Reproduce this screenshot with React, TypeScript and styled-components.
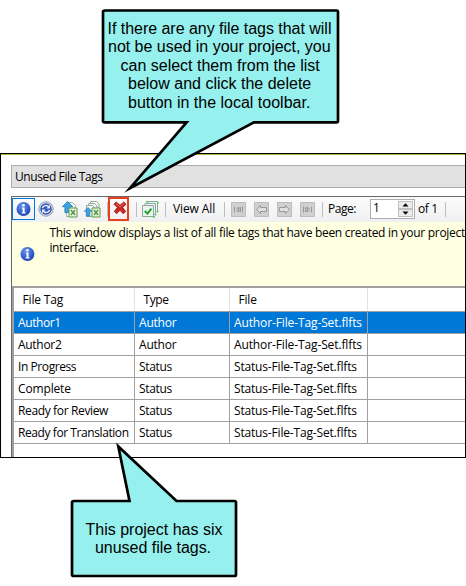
import React from "react";
import styled, { createGlobalStyle } from "styled-components";

const GlobalStyle = createGlobalStyle`
  * { box-sizing: border-box; }
  body { margin: 0; background: #fff; }
`;

const Page = styled.main`
  position: relative;
  width: 466px;
  height: 586px;
  padding-top: 153px;
  overflow: hidden;
  color: #000;
  font: 12px/15px "Open Sans", "Noto Sans", sans-serif;
`;

const Text = styled.span<{ $track?: number }>`
  letter-spacing: ${(p) => p.$track ?? 0}px;
  white-space: nowrap;
`;

const Window = styled.section`
  display: flex;
  flex-direction: column;
  width: 466px;
  height: 305px;
  padding: 11px 0 0 10px;
  border: 1px solid #000;
  box-shadow: inset 0 1px 0 #a8b43c;
  background: #fff;
`;

const TitleBar = styled.header`
  flex: none;
  height: 23px;
  padding-left: 3px;
  border: 1px solid #adadad;
  border-right: 0;
  background: #e1e1e1;
  line-height: 21px;
`;

const Panel = styled.div`
  display: flex;
  flex: 1;
  flex-direction: column;
  margin-top: 8px;
  border: solid #696969;
  border-width: 1px 0 0 1px;
  overflow: hidden;
`;

const Toolbar = styled.div`
  display: flex;
  flex: none;
  align-items: center;
  height: 25px;
  padding-bottom: 1px;
  background: linear-gradient(#fbfbfb, #f0f0f0);
`;

const ToolButton = styled.button<{ $w: number; $gap?: number; $active?: boolean }>`
  display: flex;
  flex: none;
  align-items: center;
  justify-content: center;
  width: ${(p) => p.$w}px;
  height: 22px;
  margin: 0 0 0 ${(p) => p.$gap ?? 0}px;
  padding: 0;
  border: ${(p) => (p.$active ? "1px solid #0078d7" : "0")};
  background: transparent;
  color: #000;
  font: inherit;
`;

const DeleteButton = styled(ToolButton)`
  height: 24px;
  border: 2px solid #e8401c;
  padding: 0 0 3px 3px;
`;

const Separator = styled.i<{ $gap: number }>`
  flex: none;
  width: 1px;
  height: 15px;
  margin-left: ${(p) => p.$gap}px;
  background: #bdbdbd;
`;

const Label = styled(Text)<{ $gap: number; $w: number }>`
  flex: none;
  width: ${(p) => p.$w}px;
  margin-left: ${(p) => p.$gap}px;
  line-height: 14px;
`;

const Spinner = styled.div`
  display: flex;
  flex: none;
  width: 45px;
  height: 20px;
  margin-left: 14px;
  border: 1px solid #abadb3;
  background: #fff;
`;

const SpinnerValue = styled.span`
  flex: 1;
  padding-left: 2px;
  height: 16px;
  line-height: 16px;
`;

const SpinnerButtons = styled.div`
  display: flex;
  flex-direction: column;
  width: 16px;
  padding: 1px 1px 1px 0;
`;

const StepButton = styled.span`
  display: flex;
  flex: 1;
  align-items: center;
  justify-content: center;
  border: 1px solid #c0c0c0;
  background: #ececec;
`;

const Message = styled.div`
  display: flex;
  flex: none;
  align-items: center;
  height: 64px;
  padding-left: 8px;
  background: #ffffe1;
`;

const MessageText = styled.p`
  display: flex;
  flex-direction: column;
  align-self: flex-start;
  margin: 3px 0 0 13.5px;
`;

const Table = styled.div`
  flex: 1;
  border: solid #a0a0a0;
  border-width: 2px 0 0 2px;
`;

const columns = "121px 95px 138px 1fr";

const HeaderRow = styled.div`
  display: grid;
  grid-template-columns: ${columns};
  height: 24px;
  border-bottom: 1px solid #a0a0a0;
  line-height: 23px;
`;

const HeaderCell = styled.div`
  padding-left: 8.5px;
  border-right: 1px solid #e2e2e2;
  &:last-child { border-right: 0; }
`;

const Row = styled.div<{ $selected?: boolean }>`
  display: grid;
  grid-template-columns: ${columns};
  height: 22px;
  border-bottom: 1px solid #a0a0a0;
  background: ${(p) => (p.$selected ? "#0078d7" : "#fff")};
  color: ${(p) => (p.$selected ? "#fff" : "#000")};
  line-height: 21px;
`;

const Cell = styled.div`
  padding-left: 4px;
  border-right: 1px solid #a0a0a0;
  &:last-child { border-right: 0; }
`;

const Callout = styled.aside<{ $x: number; $y: number; $w: number; $h: number }>`
  position: absolute;
  left: ${(p) => p.$x}px;
  top: ${(p) => p.$y}px;
  width: ${(p) => p.$w}px;
  height: ${(p) => p.$h}px;
  font: 16px/18.5px "Liberation Sans", Arial, sans-serif;
`;

const Bubble = styled.svg`
  position: absolute;
  inset: 0;
  fill: #96f0ed;
  stroke: #000;
  stroke-width: 2.7;
  stroke-miterlimit: 10;
`;

const CalloutLines = styled.div<{ $top: number }>`
  position: relative;
  display: flex;
  flex-direction: column;
  padding-top: ${(p) => p.$top}px;
`;

const CalloutLine = styled(Text)<{ $indent: number }>`
  padding-left: ${(p) => p.$indent}px;
`;

const InfoIcon = () => (
  <svg width="16" height="16" viewBox="0 0 16 16">
    <defs>
      <radialGradient id="info" cx=".4" cy=".3" r=".75">
        <stop offset="0" stopColor="#6d94ee" />
        <stop offset=".6" stopColor="#3462cf" />
        <stop offset="1" stopColor="#1c3ea6" />
      </radialGradient>
    </defs>
    <circle cx="7.5" cy="8" r="7" fill="url(#info)" />
    <circle cx="7.5" cy="4.3" r="1.3" fill="#fff" />
    <path d="M6 6.6h2.6v4.7h1v1.2H5.700v-1.2h1V7.800H6z" fill="#fff" />
  </svg>
);

const RefreshIcon = () => (
  <svg width="16" height="16" viewBox="0 0 16 16" fill="none">
    <circle cx="8" cy="8" r="7.200" fill="#d3d7e4" stroke="#9a9fb2" />
    <circle cx="8" cy="8" r="5.700" fill="#3358b8" />
    <path d="M4.400 7.200C5 4.400 8.800 3.600 10.600 5.800M11.600 8.800C11 11.600 7.200 12.400 5.400 10.200" stroke="#e4ebff" strokeWidth="1.500" />
    <path d="M12 3.800v3.600H8.400zM4 12.200V8.600h3.600z" fill="#e4ebff" />
  </svg>
);

const Sheet = ({ x, y }: { x: number; y: number }) => (
  <g transform={`translate(${x} ${y})`}>
    <path d="M.5.5h8v9h-8z" fill="#eef5e8" stroke="#5d9a49" />
    <path d="M2.4 2.5l4.2 5M6.6 2.5l-4.2 5" stroke="#4e9138" strokeWidth="1.300" />
  </g>
);

const ExportIcon = () => (
  <svg width="16" height="17" viewBox="0 0 16 17" fill="none">
    <path d="M4.500 1.500h6l3 3v11h-9z" fill="#f4f7f8" stroke="#a3b0b2" />
    <path d="M5.500.500L10.800 5.700H8.200V11.500H2.900V5.700H.400z" fill="#3aa4e4" stroke="#2878b0" strokeWidth=".8" />
    <Sheet x={6.500} y={6.500} />
  </svg>
);

const ExportAllIcon = () => (
  <svg width="17" height="17" viewBox="0 0 17 17" fill="none">
    <path d="M6.500.5h6l2.500 2.500v8H6.500z" fill="#f4f8f5" stroke="#94aaa0" />
    <path d="M4.500 2.500h6l2.500 2.500v8H4.500z" fill="#f4f8f5" stroke="#94aaa0" />
    <path d="M2.500 4.500h6L11 7v8.500H2.500z" fill="#f4f8f5" stroke="#94aaa0" />
    <path d="M4 6.500L7.800 10.300H5.800v4.700H2.300v-4.700H.300z" fill="#3aa4e4" stroke="#2878b0" strokeWidth=".7" />
    <Sheet x={7.500} y={6.500} />
  </svg>
);

const DeleteIcon = () => (
  <svg width="14" height="14" viewBox="0 0 14 14">
    <path d="M1 3.200L3.200 1 7 4.300 10.800 1 13 3.200 9.700 6.600l3 4-2.500 2.200L7 9.300l-3.400 3.400L1.300 10.400l3-3.800z" fill="#cf2424" stroke="#8f1515" strokeWidth=".8" />
    <path d="M3 2.400L7 6l4-3.600" fill="none" stroke="#ee7070" strokeWidth=".9" />
  </svg>
);

const CheckAllIcon = () => (
  <svg width="17" height="17" viewBox="0 0 17 17" fill="none">
    <path d="M5.500.500h10v10.500h-10z" fill="#f0f6f2" stroke="#8ba69c" />
    <path d="M3 2.500h10.500V13.500H3z" fill="#f0f6f2" stroke="#8ba69c" />
    <path d="M.500 4.500h11v11H.500z" fill="#eaf3ee" stroke="#8ba69c" />
    <path d="M11 16h2M16 1v1.500M13.500 14h1M15.500 10.500h1M4 .500h1.500" stroke="#22e034" strokeWidth="1.500" />
    <path d="M2.800 10l2.700 2.600L9.400 7.600" stroke="#21a02b" strokeWidth="2" />
  </svg>
);

type NavKind = "first" | "prev" | "next" | "last";
const NavIcon = ({ kind }: { kind: NavKind }) => {
  const edge = kind === "first" || kind === "last";
  const flip = kind === "next" || kind === "last";
  return (
    <svg width="15" height="15" viewBox="0 0 15 15">
      <path d="M.500.500h14v14H.500z" fill="#d0d0d0" stroke="#bcbcbc" />
      <g transform={flip ? "translate(15 0) scale(-1 1)" : undefined} fill="#dedede" stroke="#999">
        {edge ? (
          <path d="M3.500 4.500v6M7.500 5v5L5.500 7.500zM9.500 5v5L7.500 7.500zM11.500 4.500v6" />
        ) : (
          <path d="M2.500 7.500L6.500 3.500v2h6v4h-6v2z" />
        )}
      </g>
    </svg>
  );
};

const Triangle = ({ down }: { down?: boolean }) => (
  <svg width="7" height="4" viewBox="0 0 7 4">
    <path d={down ? "M.5.5h6L3.5 3.7z" : "M.5 3.5h6L3.5.3z"} fill="#000" />
  </svg>
);

type Entry = [label: string, tracking: number];
const author: Entry = ["Author", -0.2];
const status: Entry = ["Status", -0.35];
const authorSet: Entry = ["Author-File-Tag-Set.flfts", -0.12];
const statusSet: Entry = ["Status-File-Tag-Set.flfts", -0.17];
const rows: Entry[][] = [
  [["Author1", -0.4], author, authorSet],
  [["Author2", -0.3], author, authorSet],
  [["In Progress", -0.42], status, statusSet],
  [["Complete", -0.15], status, statusSet],
  [["Ready for Review", -0.36], status, statusSet],
  [["Ready for Translation", -0.42], status, statusSet],
];
const headers: Entry[] = [["File Tag", -0.15], ["Type", -0.4], ["File", -0.2]];

export default function App() {
  return (
    <Page>
      <GlobalStyle />
      <Window>
        <TitleBar><Text $track={-0.4}>Unused File Tags</Text></TitleBar>
        <Panel>
          <Toolbar>
            <ToolButton $w={23} $active><InfoIcon /></ToolButton>
            <ToolButton $w={16} $gap={3}><RefreshIcon /></ToolButton>
            <ToolButton $w={16} $gap={8}><ExportIcon /></ToolButton>
            <ToolButton $w={17} $gap={6}><ExportAllIcon /></ToolButton>
            <Separator $gap={6} />
            <DeleteButton $w={21}><DeleteIcon /></DeleteButton>
            <Separator $gap={7} />
            <ToolButton $w={17} $gap={5}><CheckAllIcon /></ToolButton>
            <Separator $gap={6} />
            <Label $gap={7} $w={43} $track={-0.1}>View All</Label>
            <Separator $gap={8} />
            <ToolButton $w={15} $gap={6}><NavIcon kind="first" /></ToolButton>
            <ToolButton $w={15} $gap={8}><NavIcon kind="prev" /></ToolButton>
            <ToolButton $w={15} $gap={8}><NavIcon kind="next" /></ToolButton>
            <ToolButton $w={15} $gap={8}><NavIcon kind="last" /></ToolButton>
            <Separator $gap={7} />
            <Label $gap={5} $w={28} $track={-0.5}>Page:</Label>
            <Spinner>
              <SpinnerValue>1</SpinnerValue>
              <SpinnerButtons>
                <StepButton><Triangle /></StepButton>
                <StepButton><Triangle down /></StepButton>
              </SpinnerButtons>
            </Spinner>
            <Label $gap={3} $w={20} $track={-0.4}>of 1</Label>
            <Separator $gap={7} />
          </Toolbar>
          <Message>
            <InfoIcon />
            <MessageText>
              <Text $track={-0.29}>This window displays a list of all file tags that have been created in your project</Text>
              <Text $track={-0.35}>interface.</Text>
            </MessageText>
          </Message>
          <Table>
            <HeaderRow>
              {headers.map(([t, k]) => <HeaderCell key={t}><Text $track={k}>{t}</Text></HeaderCell>)}
              <HeaderCell />
            </HeaderRow>
            {rows.map((cells, i) => (
              <Row key={i} $selected={i === 0}>
                {cells.map(([t, k]) => <Cell key={t}><Text $track={k}>{t}</Text></Cell>)}
                <Cell />
              </Row>
            ))}
          </Table>
        </Panel>
      </Window>

      <Callout $x={101} $y={9} $w={240} $h={186}>
        <Bubble width="240" height="186" viewBox="101 9 240 186">
          <path d="M105 10.500H336.500Q338 10.500 338 12V121Q338 122.300 336.500 122.300H254L130 188.200L186.600 122.300H105Q103 122.300 103 121V12Q103 10.500 105 10.500Z" />
        </Bubble>
        <CalloutLines $top={10.6}>
          <CalloutLine $indent={6.5} $track={-0.03}>If there are any file tags that will</CalloutLine>
          <CalloutLine $indent={7} $track={-0.02}>not be used in your project, you</CalloutLine>
          <CalloutLine $indent={19.5}>can select them from the list</CalloutLine>
          <CalloutLine $indent={27}>below and click the delete</CalloutLine>
          <CalloutLine $indent={27}>button in the local toolbar.</CalloutLine>
        </CalloutLines>
      </Callout>

      <Callout $x={70} $y={440} $w={170} $h={140}>
        <Bubble width="170" height="140" viewBox="70 440 170 140">
          <path d="M74 501H129.500L118.300 446.500L176.500 501H234.500Q236 501 236 502.500V574.500Q236 576 234.500 576H74Q72 576 72 574.500V502.500Q72 501 74 501Z" />
        </Bubble>
        <CalloutLines $top={80.6}>
          <CalloutLine $indent={15.5}>This project has six</CalloutLine>
          <CalloutLine $indent={25} $track={-0.03}>unused file tags.</CalloutLine>
        </CalloutLines>
      </Callout>
    </Page>
  );
}
